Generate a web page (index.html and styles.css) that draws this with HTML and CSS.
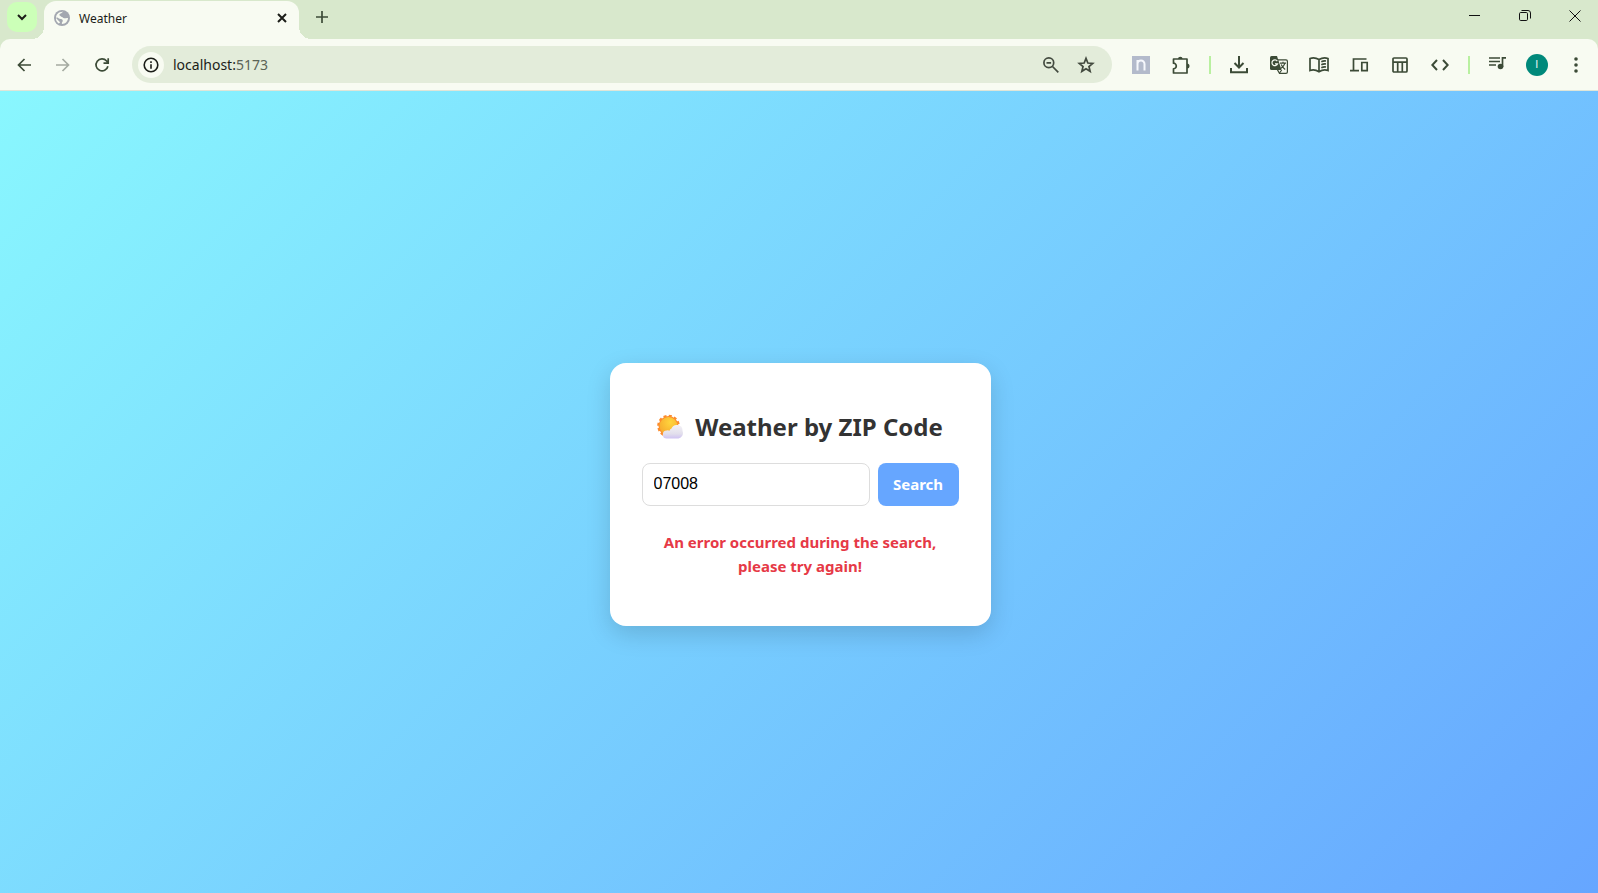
FILE: index.html
```html
<!DOCTYPE html>
<html lang="en">
<head>
<meta charset="utf-8">
<title>Weather</title>
<link rel="stylesheet" href="styles.css">
</head>
<body>
<header class="browser">
  <div class="tabstrip">
    <button class="tab-search" aria-label="Search tabs"><svg width="12" height="12" viewBox="0 0 12 12"><path class="line heavy" d="M2 4l4 4 4-4"/></svg></button>
    <div class="tab">
      <svg width="16" height="16" viewBox="0 0 16 16"><circle cx="8" cy="8" r="8" fill="#a3a7b0"/><path fill="#f8fbf2" d="M9.300 1.900c-1.700.3-1.500 1.300-2.700 1.700-1.300.5-1.600 1.700-.6 2.200.9.400.8 1.200 2 1.200.9 0 1 1.300 2.200 1.300 1.300 0 2.200-.3 3.800-.3-.1 3.200-2.600 5.900-5.800 6-.8-.7-.2-1.800.4-2.600.6-.9-.3-2.300-1.800-2.300C4.700 9.100 4.500 7.300 2 7.200c-.5 2.700.8 5 2.700 6.200l1.300-.7c-.2-1.200-1.300-1.500-2-2.400C3 9.200 2.800 8.300 2 8.300 1.800 4.600 5 1.500 9.300 1.900z"/></svg>
      <span class="tab-title">Weather</span>
      <button class="plain" aria-label="Close tab"><svg width="12" height="12" viewBox="0 0 12 12"><path class="line heavy" d="M2 2l8 8M10 2l-8 8"/></svg></button>
    </div>
    <button class="plain new-tab" aria-label="New tab"><svg width="14" height="14" viewBox="0 0 14 14"><path class="line green medium" d="M7 1v12M1 7h12"/></svg></button>
    <div class="window-controls">
      <button class="plain" aria-label="Minimize"><svg width="12" height="12" viewBox="0 0 12 12"><path class="line thin" d="M0 5.500h11"/></svg></button>
      <button class="plain" aria-label="Restore"><svg width="12" height="12" viewBox="0 0 12 12"><rect class="line thin" x=".5" y="2.500" width="8" height="8" rx="1.200"/><path class="line thin" d="M2.500.5h6.500a2.500 2.500 0 0 1 2.500 2.500v5.500"/></svg></button>
      <button class="plain" aria-label="Close"><svg width="12" height="12" viewBox="0 0 12 12"><path class="line thin" d="M.5.5l11 11M11.500.5l-11 11"/></svg></button>
    </div>
  </div>
  <div class="toolbar">
    <nav class="nav" aria-label="History">
      <button class="plain" aria-label="Back"><svg width="14" height="14" viewBox="0 0 14 14"><path class="line green medium" d="M14 7H1.500M7.500 1l-6 6 6 6"/></svg></button>
      <button class="plain" aria-label="Forward" disabled><svg width="14" height="14" viewBox="0 0 14 14"><path class="line pale" d="M0 7h12.500M6.500 1l6 6-6 6"/></svg></button>
      <button class="plain" aria-label="Reload"><svg width="16" height="16" viewBox="0 0 16 16"><path class="line green medium" d="M13.900 9.200A6 6 0 1 1 12.600 4L14 5.600M14.200 1.300v4.900H9.500"/></svg></button>
    </nav>
    <div class="omnibox">
      <button class="site-info" aria-label="Site information"><svg width="16" height="16" viewBox="0 0 16 16"><circle class="line" cx="8" cy="8" r="6.800"/><path class="line" d="M8 7.200v4.500M8 4.200v1.700"/></svg></button>
      <a class="address" href="#"><span>localhost:</span><span class="port">5173</span></a>
      <button class="plain" aria-label="Zoom"><svg width="18" height="18" viewBox="0 0 18 18"><circle class="line grey" cx="6.800" cy="6.800" r="4.900"/><path class="line grey" d="M10.500 10.500l5.800 5.800M4.500 6.800h4.600"/></svg></button>
      <button class="plain" aria-label="Bookmark"><svg width="18" height="18" viewBox="0 0 18 18"><path class="line grey" d="M9 2.400l1.850 4.600 4.850.35-3.750 3.150 1.200 4.800L9 12.700l-4.150 2.600 1.200-4.800L2.300 7.350 7.150 7z"/></svg></button>
    </div>
    <div class="actions">
      <button class="plain" aria-label="Extension"><svg width="18" height="18" viewBox="0 0 18 18"><path fill="#b3bacb" d="M0 0h18v18H0z"/><path d="M5.500 14.500V8a3.500 3.500 0 0 1 7 0v6.500M5.500 14.500V4" fill="none" stroke="#f5f7fc" stroke-width="2"/></svg></button>
      <button class="plain" aria-label="Extensions"><svg width="20" height="20" viewBox="0 0 20 20"><path class="line green medium" stroke-linejoin="round" d="M2.500 4h13.500v14H2.500v-4.200a2.800 2.800 0 0 0 0-5.600z"/><path class="solid" d="M7 4a2.300 2.300 0 0 1 4.600 0zM16 8.500a2.500 2.500 0 0 1 0 5z"/></svg></button>
      <span class="separator"></span>
      <button class="plain" aria-label="Downloads"><svg width="18" height="18" viewBox="0 0 18 18"><path class="line green" d="M9 0v11.500M4.500 7L9 11.500 13.500 7M1 12v4.300h16V12"/></svg></button>
      <button class="plain" aria-label="Translate"><svg width="18" height="18" viewBox="0 0 18 18"><path class="line green slim" d="M7 3.800h9q1.400 0 1.400 1.400v10.700q0 1.400-1.400 1.400H9.500L7 13"/><path class="solid" d="M1.500 0H7l4.500 14h-10Q0 14 0 12.500v-11Q0 0 1.500 0z"/><path d="M7.300 5.200a2.900 2.900 0 1 0 .3 2.600H5" fill="none" stroke="#f8fbf2" stroke-width="1.200"/><path class="line green slim" d="M10 7.200h6M13 5.700v1.500M15 7.200q-.8 3-4.300 5.200M11.200 8.500q1.500 3.200 4 5M9.500 17l2.200-3"/></svg></button>
      <button class="plain" aria-label="Reading mode"><svg width="20" height="18" viewBox="0 0 20 18"><path class="line green medium" d="M10 3.500Q5.500.8 1 2.500v12q4.500-1.500 9 1.200 4.500-2.700 9-1.200v-12Q14.500.8 10 3.500zM10 3.500v12.200M12.300 5.700q2.200-1 4.700-.7M12.300 8.700q2.200-1 4.700-.7M12.300 11.700q2.200-1 4.700-.7"/></svg></button>
      <button class="plain" aria-label="Send to device"><svg width="20" height="18" viewBox="0 0 20 18"><path class="line green medium" d="M17.500 3H4.500v11.500M1 14.700h9M12.800 6.500h5.400v8.200h-5.400z"/></svg></button>
      <button class="plain" aria-label="Reading list"><svg width="16" height="16" viewBox="0 0 16 16"><rect class="line green medium" x="1" y="1" width="14" height="14" rx="1"/><path class="line green medium" d="M1 5.200h14M5.700 5.200V15M10.300 5.200V15"/></svg></button>
      <button class="plain" aria-label="Developer tools"><svg width="18" height="12" viewBox="0 0 18 12"><path class="line green" d="M6 1L1.300 6 6 11M12 1l4.700 5L12 11"/></svg></button>
      <span class="separator"></span>
      <button class="plain" aria-label="Media controls"><svg class="raised" width="18" height="14" viewBox="0 0 18 14"><path class="line green medium" d="M0 2h11M0 5.500h11M0 9h7M13.500 11V1.800H17"/><circle class="solid" cx="11.500" cy="10.500" r="2.800"/></svg></button>
      <button class="avatar" aria-label="Profile">I</button>
      <button class="plain" aria-label="Menu"><svg width="4" height="16" viewBox="0 0 4 16"><circle class="solid" cx="2" cy="2" r="1.800"/><circle class="solid" cx="2" cy="8" r="1.800"/><circle class="solid" cx="2" cy="14" r="1.800"/></svg></button>
    </div>
  </div>
</header>
<main class="page">
  <section class="card">
    <h1 class="title">
      <svg width="26" height="26" viewBox="0 0 26 26" aria-hidden="true">
        <defs>
          <radialGradient id="sun" cx=".6" cy=".3" r=".8"><stop offset="0" stop-color="#ffd53d"/><stop offset="1" stop-color="#f5a52c"/></radialGradient>
          <linearGradient id="cloud" x1="0" y1="0" x2="0" y2="1"><stop offset="0" stop-color="#f4f2f6"/><stop offset=".65" stop-color="#e2dfec"/><stop offset="1" stop-color="#cfc2f2"/></linearGradient>
        </defs>
        <circle cx="11.500" cy="12" r="10" fill="#fc8b2c"/>
        <circle cx="11.500" cy="12" r="10.200" fill="none" stroke="#fc8b2c" stroke-width="2.200" stroke-dasharray="3 2.340"/>
        <circle cx="11.500" cy="12" r="9" fill="url(#sun)"/>
        <path fill="url(#cloud)" d="M10 24.500a4 4 0 0 1-.3-8q1.500-.4 2.800.2a3.500 3.500 0 0 1 2-2.100 5.700 5.700 0 0 1 11 2.400A5.500 5.500 0 0 1 21.500 24.500z"/>
      </svg>
      <span>Weather by ZIP Code</span>
    </h1>
    <form class="search">
      <input class="zip" type="text" value="07008" aria-label="ZIP code">
      <button class="submit" type="button">Search</button>
    </form>
    <p class="error">An error occurred during the search, please try again!</p>
  </section>
</main>
</body>
</html>
```

FILE: styles.css
```css
* { box-sizing: border-box; }
body {
  margin: 0;
  min-height: 100vh;
  display: flex;
  flex-direction: column;
  font-family: "Noto Sans", "Open Sans", sans-serif;
}
button { font-family: inherit; border: 0; padding: 0; }
svg { display: block; flex: none; }
.line { fill: none; stroke: #1b1d18; stroke-width: 1.600; }
.heavy { stroke-width: 2; }
.thin { stroke-width: 1; stroke: #111; }
.green { stroke: #3c4b37; stroke-width: 2; }
.grey { stroke: #434a3f; stroke-width: 1.700; }
.pale { stroke: #a5aba1; stroke-width: 1.700; }
.medium { stroke-width: 1.700; }
.slim { stroke-width: 1.200; }
.solid { fill: #3c4b37; }
.plain {
  display: flex;
  align-items: center;
  justify-content: center;
  width: 24px;
  height: 24px;
  flex: none;
  background: none;
}
.browser { background: #d8e8cc; }
.tabstrip { display: flex; height: 39px; }
.tab-search {
  display: flex;
  align-items: center;
  justify-content: center;
  width: 30px;
  height: 30px;
  margin: 2px 7px 0;
  border-radius: 10px;
  background: #ccffb8;
}
.tab {
  position: relative;
  display: flex;
  align-items: center;
  gap: 9px;
  width: 255px;
  margin-top: 1px;
  padding: 0 5px 5px 10px;
  border-radius: 12px 12px 0 0;
  background: #f8fbf2;
}
.tab::before, .tab::after {
  content: "";
  position: absolute;
  bottom: 0;
  width: 12px;
  height: 12px;
}
.tab::before { right: 100%; background: radial-gradient(circle at 0 0, transparent 12px, #f8fbf2 12px); }
.tab::after { left: 100%; background: radial-gradient(circle at 100% 0, transparent 12px, #f8fbf2 12px); }
.tab-title { flex: 1; padding-top: 2px; font-size: 12px; line-height: 16px; color: #1b1d18; }
.new-tab { margin: 5px 0 0 11px; }
.window-controls { display: flex; gap: 26px; margin: 4px 11px 0 auto; }
.toolbar {
  display: flex;
  align-items: center;
  height: 52px;
  padding: 0 10px 0 12px;
  border-bottom: 1px solid #dfe5d8;
  border-radius: 10px 10px 0 0;
  background: #f8fbf2;
}
.nav { display: flex; gap: 15px; margin-right: 18px; }
.omnibox {
  display: flex;
  align-items: center;
  flex: 1;
  gap: 11px;
  height: 37px;
  padding: 0 14px 0 6px;
  border-radius: 19px;
  background: #e3ecda;
}
.site-info {
  display: flex;
  align-items: center;
  justify-content: center;
  width: 26px;
  height: 26px;
  border-radius: 50%;
  background: #f8fbf2;
}
.address { flex: 1; margin-left: -2px; font-size: 14px; line-height: 20px; color: #1b1d18; text-decoration: none; }
.port { color: #5b6356; }
.actions {
  display: flex;
  align-items: center;
  justify-content: space-between;
  width: 459px;
  margin-left: 17px;
}
.separator { width: 2px; height: 18px; background: #b9f0a0; }
.raised { margin-bottom: 4px; }
.avatar {
  width: 22px;
  height: 22px;
  border-radius: 50%;
  background: #00897b;
  color: #e0f2ef;
  font-family: Roboto, sans-serif;
  font-size: 11px;
}
.page {
  flex: 1;
  display: flex;
  align-items: center;
  justify-content: center;
  padding: 4px 0 0 2px;
  background: linear-gradient(135deg, #89f7fe, #66a6ff);
}
.card {
  width: 381px;
  padding: 48px 32px;
  border-radius: 16px;
  background: #fff;
  box-shadow: 0 8px 24px rgba(0, 0, 0, 0.15);
  text-align: center;
}
.title {
  display: flex;
  align-items: center;
  justify-content: center;
  gap: 12px;
  margin: 0 0 20px;
  color: #333;
  font-size: 24px;
  line-height: 32px;
  white-space: nowrap;
}
.search { display: flex; gap: 8px; }
.zip {
  flex: 1;
  min-width: 0;
  height: 43px;
  padding: 0 11px;
  border: 1px solid #ddd;
  border-radius: 8px;
  background: #fff;
  color: #000;
  font: 16px "Liberation Sans", sans-serif;
}
.submit {
  width: 81px;
  height: 43px;
  border-radius: 8px;
  background: #66a6ff;
  color: #fff;
  font-size: 15px;
  font-weight: 700;
}
.error {
  margin: 24px 0 0;
  color: #e63946;
  font-size: 15px;
  font-weight: 700;
  line-height: 24px;
}
```
